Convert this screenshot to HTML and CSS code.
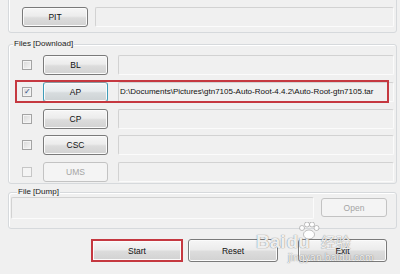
FILE: index.html
```html
<!DOCTYPE html>
<html lang="en">
<head>
    <meta charset="UTF-8">
    <title>Odin</title>
    <link rel="stylesheet" href="styles.css">
</head>
<body>
    <div class="app">
        <div class="group group-part">
            <span class="group-title">Re-Partition</span>
            <div class="row">
                <button class="btn btn-pit">PIT</button>
                <div class="field field-pit"></div>
            </div>
        </div>

        <div class="group group-files">
            <span class="group-title">Files [Download]</span>
            <div class="row">
                <span class="check"></span>
                <button class="btn">BL</button>
                <div class="field"></div>
            </div>
            <div class="row">
                <span class="check checked">&#10003;</span>
                <button class="btn btn-focus">AP</button>
                <div class="field">D:\Documents\Pictures\gtn7105-Auto-Root-4.4.2\Auto-Root-gtn7105.tar</div>
                <span class="mark"></span>
            </div>
            <div class="row">
                <span class="check"></span>
                <button class="btn">CP</button>
                <div class="field"></div>
            </div>
            <div class="row">
                <span class="check"></span>
                <button class="btn">CSC</button>
                <div class="field"></div>
            </div>
            <div class="row">
                <span class="check check-off"></span>
                <button class="btn btn-off">UMS</button>
                <div class="field"></div>
            </div>
        </div>

        <div class="group group-dump">
            <span class="group-title">File [Dump]</span>
            <div class="row">
                <div class="field field-dump"></div>
                <button class="btn btn-off btn-open">Open</button>
            </div>
        </div>

        <div class="actions">
            <button class="btn btn-big btn-start">Start</button>
            <button class="btn btn-big btn-reset">Reset</button>
            <button class="btn btn-big btn-exit">Exit</button>
        </div>
    </div>

    <div class="watermark">
        <div class="wm-logo">
            <span>Bai</span>
            <span class="wm-du">du</span>
            <svg class="paw" width="22" height="18" viewBox="0 0 22 18">
                <circle cx="4" cy="6" r="2.5"/>
                <circle cx="9" cy="2.5" r="2.5"/>
                <circle cx="14" cy="2.5" r="2.5"/>
                <circle cx="18.5" cy="6" r="2.5"/>
                <ellipse cx="11" cy="12.5" rx="5.5" ry="4.5"/>
            </svg>
            <span class="wm-cn">经验</span>
        </div>
        <div class="wm-url">jingyan.baidu.com</div>
    </div>
</body>
</html>
```

FILE: styles.css
```css
body
{
    margin: 0;
    width: 400px;
    height: 274px;
    overflow: hidden;
    position: relative;
    background: #f0f0f0;
    font-family: "Liberation Sans", Arial, sans-serif;
    font-size: 8px;
    color: #1a1a1a;
}

.app
{
    display: flex;
    flex-direction: column;
    padding: 0 3px 0 8px;
}

.group
{
    position: relative;
    border: 1px solid #d6d9dc;
    border-radius: 3px;
    box-shadow: inset 1px 1px 0 #ffffff;
}

.group-title
{
    position: absolute;
    top: -6px;
    left: 4px;
    padding: 0 1px;
    line-height: 10px;
    background: #f0f0f0;
}

.row
{
    display: flex;
    align-items: center;
    height: 20px;
    position: relative;
}

.group-part
{
    margin-top: -4px;
    padding: 10px 2px 5px 13px;
}

.group-files
{
    margin-top: 11px;
    padding: 10px 2px 1px 12px;
    display: flex;
    flex-direction: column;
    gap: 6.75px;
}

.group-dump
{
    margin-top: 8px;
    padding: 4px 2px 9px 2px;
}

.group-dump .row
{
    height: 22px;
    align-items: flex-start;
}

.group-dump .group-title
{
    left: 8px;
}

.btn
{
    box-sizing: border-box;
    width: 65px;
    height: 20px;
    padding: 0;
    border: 1px solid #7a7a7a;
    border-radius: 3px;
    background: linear-gradient(#f6f6f6 0%, #ececec 45%, #dcdcdc 55%, #d2d2d2 100%);
    box-shadow: inset 0 0 0 1px #fbfbfb;
    font-family: inherit;
    font-size: 8.5px;
    color: #111111;
}

.btn-pit
{
    width: 66px;
}

.btn-focus
{
    border-color: #8a9aa2;
    border-left-color: #3f9cb8;
    border-right-color: #3f9cb8;
    background: linear-gradient(#f0f4f6 0%, #e8ecee 45%, #d7dcde 55%, #cdd2d4 100%);
}

.btn-off
{
    border-color: #c3c3c3;
    background: #f4f4f4;
    box-shadow: none;
    color: #a4a4a4;
}

.field
{
    box-sizing: border-box;
    flex: 1;
    height: 20px;
    margin-left: 10px;
    padding: 3px 0 0 1px;
    border: 1px solid #d2d2d2;
    border-right-color: #fbfbfb;
    border-bottom-color: #fbfbfb;
    border-radius: 2px;
    background: #f0f0f0;
    white-space: nowrap;
    overflow: hidden;
    line-height: 11px;
    color: #111111;
}

.field-pit
{
    margin-left: 7px;
}

.field-dump
{
    flex: none;
    width: 303px;
    height: 22px;
    margin-left: 0;
}

.btn-open
{
    width: 66px;
    height: 19px;
    margin: 1px 0 0 7px;
}

.check
{
    box-sizing: border-box;
    width: 10px;
    height: 10px;
    margin-left: 1px;
    margin-right: 11px;
    border: 1px solid #a4a4a4;
    background: linear-gradient(135deg, #d8d8d8, #f6f6f6);
    box-shadow: inset 0 0 0 1px #f4f4f4;
    font-size: 8px;
    line-height: 8px;
    text-align: center;
    color: #2c4c86;
}

.check-off
{
    border-color: #c6c6c6;
    background: #f4f4f4;
}

.mark
{
    position: absolute;
    left: -6px;
    top: -2px;
    width: 370px;
    height: 19px;
    border: 2px solid #c53840;
    pointer-events: none;
}

.actions
{
    display: flex;
    margin-top: 10px;
    padding-left: 83px;
}

.btn-big
{
    height: 23px;
    font-size: 8.5px;
}

.btn-start
{
    width: 92px;
    border: 2px solid #c53840;
    border-radius: 0;
}

.btn-reset
{
    width: 90px;
    margin-left: 5px;
}

.btn-exit
{
    width: 89px;
    margin-left: 20px;
}

.watermark
{
    position: absolute;
    left: 256px;
    top: 222px;
    color: rgba(255, 255, 255, 0.9);
    text-shadow: 0 0 1px rgba(100, 100, 100, 0.7), 0 0 1px rgba(100, 100, 100, 0.5);
    pointer-events: none;
}

.wm-logo
{
    display: flex;
    align-items: flex-end;
    font-family: "Liberation Sans", sans-serif;
    font-size: 19px;
    font-weight: bold;
    line-height: 20px;
}

.paw
{
    fill: rgba(255, 255, 255, 0.9);
    stroke: rgba(110, 110, 110, 0.6);
    stroke-width: 0.7;
    margin: 0 0 12px -12px;
}

.wm-du
{
    margin-left: 1px;
}

.wm-cn
{
    margin-left: 1px;
    font-family: "Noto Sans CJK SC", sans-serif;
    font-size: 15px;
    font-weight: normal;
}

.wm-url
{
    margin: 0 0 0 32px;
    font-size: 10px;
    line-height: 12px;
    letter-spacing: 0.3px;
}
```
